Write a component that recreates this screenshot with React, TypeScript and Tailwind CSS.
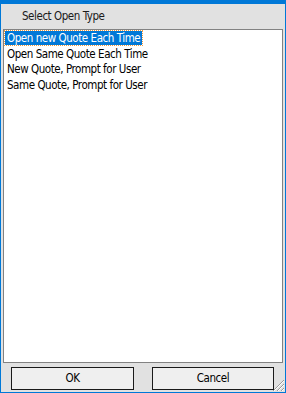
import React from 'react';

const items = [
  'Open new Quote Each Time',
  'Open Same Quote Each Time',
  'New Quote, Prompt for User',
  'Same Quote, Prompt for User',
];

const Grip = () => (
  <svg className="absolute right-0 bottom-0" width="13" height="13" viewBox="0 0 13 13">
    <path d="M12 1 L1 12 M12 5 L5 12 M12 9 L9 12" stroke="#9a9a9a" strokeWidth="1" />
    <path d="M12 2 L2 12 M12 6 L6 12 M12 10 L10 12" stroke="#ffffff" strokeWidth="1" />
  </svg>
);

export default function App() {
  return (
    <div className="w-[286px] h-[393px] bg-[#0078d7] pt-[4px] px-px pb-px font-['DejaVu_Sans_Condensed','DejaVu_Sans',sans-serif] text-[11.5px] tracking-[-0.45px] text-black">
      <div className="relative h-full bg-[#e1e1e1] flex flex-col">
        <div className="h-[25px] flex items-center pl-[21px] pt-px text-[#1a1a1a]">Select Open Type</div>
        <div className="mx-[2px] h-[334px] bg-white border border-[#828282] pl-px">
          {items.map((t, i) => (
            <div key={t} className="h-[15.7px] flex items-center">
              <span
                className={
                  i === 0
                    ? 'px-[2px] leading-[14px] bg-[#0078d7] text-white outline-1 outline-dotted outline-[#f09a3e]'
                    : 'px-[2px] leading-[14px]'
                }
              >
                {t}
              </span>
            </div>
          ))}
        </div>
        <div className="flex justify-between pl-[10px] pr-[11px] pt-[4px]">
          <button className="w-[123px] h-[23px] border border-[#1a1a1a] bg-[#efefef] text-center">OK</button>
          <button className="w-[122px] h-[23px] border border-[#1a1a1a] bg-[#efefef] text-center">Cancel</button>
        </div>
        <Grip />
      </div>
    </div>
  );
}
